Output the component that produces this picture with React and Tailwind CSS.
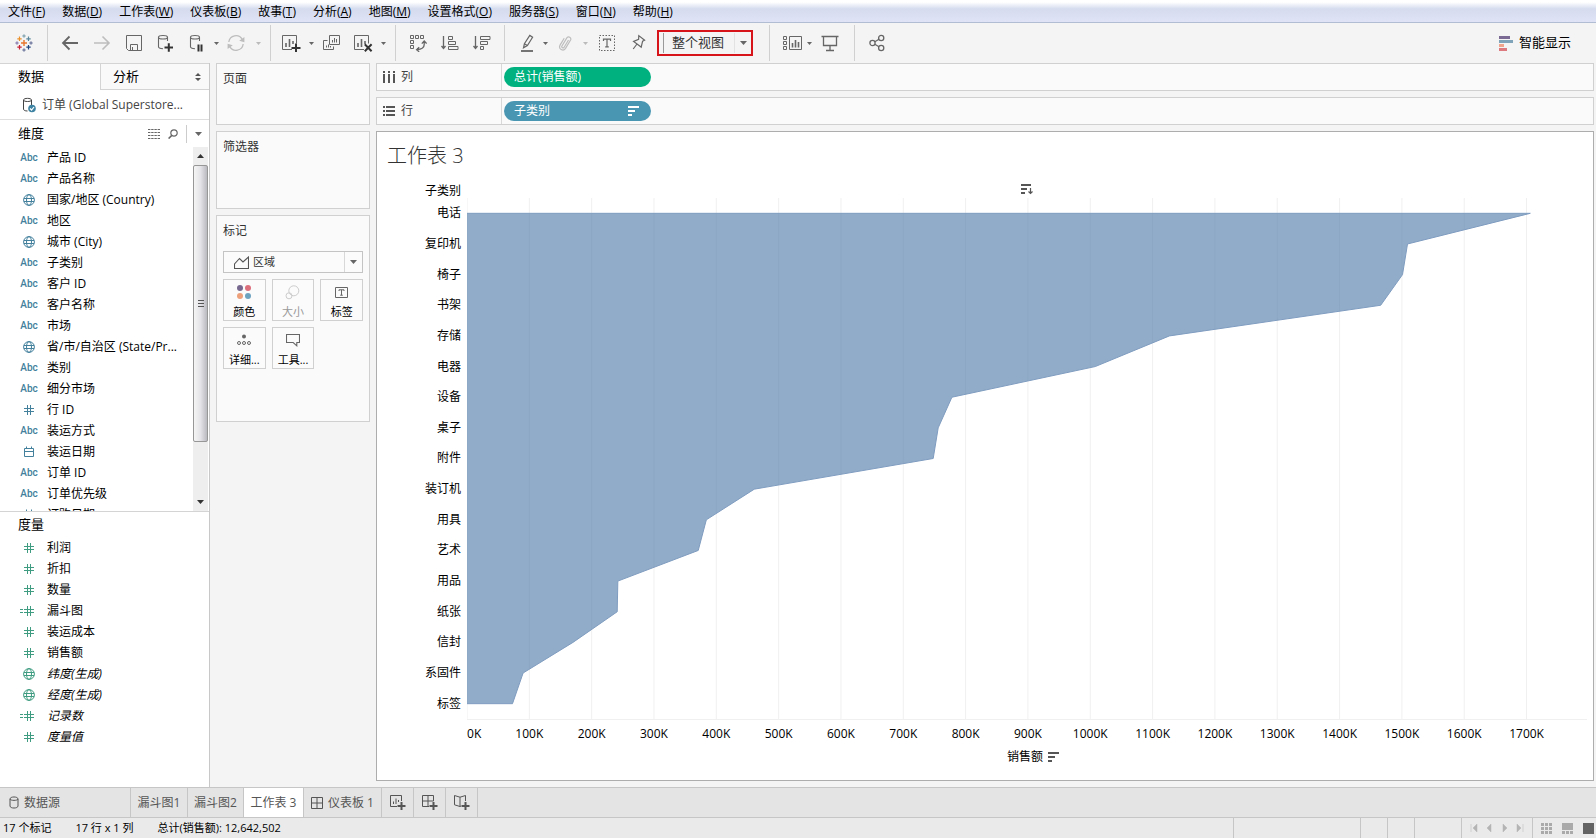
import React from "react";

const MENUS = [
  ["文件", "F"],
  ["数据", "D"],
  ["工作表", "W"],
  ["仪表板", "B"],
  ["故事", "T"],
  ["分析", "A"],
  ["地图", "M"],
  ["设置格式", "O"],
  ["服务器", "S"],
  ["窗口", "N"],
  ["帮助", "H"],
];

const DIMENSIONS = [
  ["abc", "产品 ID"],
  ["abc", "产品名称"],
  ["globe", "国家/地区 (Country)"],
  ["abc", "地区"],
  ["globe", "城市 (City)"],
  ["abc", "子类别"],
  ["abc", "客户 ID"],
  ["abc", "客户名称"],
  ["abc", "市场"],
  ["globe", "省/市/自治区 (State/Pr..."],
  ["abc", "类别"],
  ["abc", "细分市场"],
  ["hash", "行 ID"],
  ["abc", "装运方式"],
  ["date", "装运日期"],
  ["abc", "订单 ID"],
  ["abc", "订单优先级"],
  ["date", "订购日期"],
];

const MEASURES = [
  ["hash", "利润"],
  ["hash", "折扣"],
  ["hash", "数量"],
  ["calc", "漏斗图"],
  ["hash", "装运成本"],
  ["hash", "销售额"],
  ["globe", "纬度(生成)", true],
  ["globe", "经度(生成)", true],
  ["calc", "记录数", true],
  ["hash", "度量值", true],
];

const SALES = [
  ["电话", 1706],
  ["复印机", 1509],
  ["椅子", 1501],
  ["书架", 1466],
  ["存储", 1127],
  ["电器", 1008],
  ["设备", 778],
  ["桌子", 756],
  ["附件", 748],
  ["装订机", 461],
  ["用具", 384],
  ["艺术", 371],
  ["用品", 242],
  ["纸张", 241],
  ["信封", 170],
  ["系固件", 90],
  ["标签", 73],
];

const AXIS_MAX = 1797;
const TICKS = Array.from({ length: 18 }, (_, i) => i * 100);

function Caret({ small, className = "text-[#666]" }) {
  return (
    <svg width={small ? 5 : 7} height={small ? 3 : 4} viewBox="0 0 7 4" className={`shrink-0 ${className}`} aria-hidden="true">
      <path d="M0 0H7L3.5 4Z" fill="currentColor" />
    </svg>
  );
}

function Svg({ w = 18, h = 18, className = "", children }) {
  return (
    <svg
      width={w}
      height={h}
      viewBox={`0 0 ${w} ${h}`}
      fill="none"
      stroke="currentColor"
      strokeWidth="1"
      className={`shrink-0 ${className}`}
      aria-hidden="true"
    >
      {children}
    </svg>
  );
}

function Logo() {
  const plus = (x, y, r, c, w) => (
    <path d={`M${x - r} ${y}H${x + r}M${x} ${y - r}V${y + r}`} stroke={c} strokeWidth={w} />
  );
  return (
    <Svg>
      {plus(9, 9, 3, "#e8762c", 1.4)}
      {plus(4.5, 4.8, 2.2, "#eb912c", 1.2)}
      {plus(13.5, 4.8, 2.2, "#59879b", 1.2)}
      {plus(4.5, 13.2, 2.2, "#c72035", 1.2)}
      {plus(13.5, 13.2, 2.2, "#1f447e", 1.2)}
      {plus(9, 2, 1.7, "#7199a6", 1)}
      {plus(9, 16, 1.7, "#5b6591", 1)}
      {plus(2, 9, 1.7, "#7a6ca5", 1)}
      {plus(16, 9, 1.7, "#5b6591", 1)}
    </Svg>
  );
}

function Tool({ label, width = "w-8", children }) {
  return (
    <button type="button" aria-label={label} className={`flex h-8 shrink-0 items-center justify-center text-[#666] ${width}`}>
      {children}
    </button>
  );
}

function Group({ className = "", children }) {
  return <div className={`flex h-full items-center border-r border-[#d0d0d0] ${className}`}>{children}</div>;
}

const cylinder = (
  <path d="M1.5 3.2C1.5 0.9 10.5 0.9 10.5 3.2V7M1.5 3.2V12.8C1.5 14 3.4 14.7 6 14.7M1.5 3.2C1.5 5.5 10.5 5.5 10.5 3.2" strokeWidth="1.1" />
);

function Toolbar() {
  return (
    <div className="flex h-10 shrink-0 items-center bg-[#f4f4f4] text-[13px]">
      <div className="flex h-9 items-center">
        <Group>
          <Tool label="Tableau" width="w-[47px]"><Logo /></Tool>
        </Group>
        <Group className="pr-1 pl-1.5">
          <Tool label="撤消">
            <Svg><path d="M17 9H2M8.5 2.5L2 9L8.5 15.5" strokeWidth="1.8" /></Svg>
          </Tool>
          <Tool label="重做">
            <Svg className="text-[#bdbdbd]"><path d="M1 9H16M9.5 2.5L16 9L9.5 15.5" strokeWidth="1.6" /></Svg>
          </Tool>
          <Tool label="保存">
            <Svg><path d="M1.5 1.5H16.5V16.5H3.5L1.5 14.5ZM5.5 16V10.5H12.5V16M7.5 16V13" /></Svg>
          </Tool>
          <Tool label="新建数据源">
            <Svg>
              {cylinder}
              <path d="M7.5 13.5H16M11.8 9.2V17.8" stroke="#333" strokeWidth="2" />
            </Svg>
          </Tool>
          <Tool label="暂停自动更新" width="w-7">
            <Svg w={14}>
              {cylinder}
              <path d="M9.5 10.5V17.5M12.5 10.5V17.5" stroke="#333" strokeWidth="2" />
            </Svg>
          </Tool>
          <Tool label="暂停选项" width="w-3"><Caret small /></Tool>
          <Tool label="运行更新" width="w-7">
            <Svg className="text-[#bdbdbd]">
              <path d="M1.8 8A7.2 7.2 0 0 1 15.2 5.4M16.2 10A7.2 7.2 0 0 1 2.8 12.6" strokeWidth="1.3" />
              <path d="M17.4 3V8.2L12.2 6.8ZM0.6 15V9.8L5.8 11.2Z" fill="currentColor" stroke="none" />
            </Svg>
          </Tool>
          <Tool label="更新选项" width="w-4"><Caret small className="text-[#bbb]" /></Tool>
        </Group>
        <Group className="pr-2 pl-1">
          <Tool label="新建工作表">
            <Svg w={20}>
              <path d="M11 15.5H1.5V1.5H15.5V9.5" />
              <path d="M5 13V9M8.5 13V5M12 10V7" strokeWidth="1.6" />
              <path d="M10.5 14H19.5M15 9.5V18" stroke="#333" strokeWidth="2" />
            </Svg>
          </Tool>
          <Tool label="新建选项" width="w-2"><Caret small /></Tool>
          <Tool label="复制工作表">
            <Svg>
              <path d="M7.5 1.5H17.5V10.5H7.5ZM5.5 6.5H1.5V15.5H11.5V12.5" />
              <path d="M10.5 8.5V6M12.5 8.5V4M14.5 8.5V5M4.5 13.5V11.5M6.5 13.5V10.5M8.5 13.5V12" />
            </Svg>
          </Tool>
          <Tool label="清除工作表">
            <Svg w={20}>
              <path d="M11 15.5H1.5V1.5H15.5V9.5" />
              <path d="M5 13V9M8.5 13V5M12 10V7" strokeWidth="1.6" />
              <path d="M11.8 10.3L18.6 17.2M18.6 10.3L11.8 17.2" stroke="#333" strokeWidth="2" />
            </Svg>
          </Tool>
          <Tool label="清除选项" width="w-2"><Caret small /></Tool>
        </Group>
        <Group className="px-1.5">
          <Tool label="交换行和列">
            <Svg>
              <path d="M1.5 1.5H4.5V4.5H1.5ZM6.5 1.5H9.5V4.5H6.5ZM11.5 1.5H14.5V4.5H11.5ZM1.5 6.5H4.5V9.5H1.5ZM1.5 11.5H4.5V14.5H1.5Z" />
              <path d="M15.2 7.5V10.5Q15.2 15.2 8 15.7M12.8 9.6L15.2 7L17.6 9.6M10.2 13.2L7.6 15.7L10.2 17.8" strokeWidth="1.3" />
            </Svg>
          </Tool>
          <Tool label="升序排序">
            <Svg>
              <path d="M2.5 2V14.5M0.5 12L2.5 14.5L4.5 12" strokeWidth="1.3" />
              <path d="M7.5 2.5H11.5V5.5H7.5ZM7.5 7.5H14.5V10.5H7.5ZM7.5 12.5H17V15.5H7.5Z" />
            </Svg>
          </Tool>
          <Tool label="降序排序">
            <Svg>
              <path d="M2.5 2V14.5M0.5 12L2.5 14.5L4.5 12" strokeWidth="1.3" />
              <path d="M7.5 2.5H17V5.5H7.5ZM7.5 7.5H14.5V10.5H7.5ZM7.5 12.5H10.5V15.5H7.5Z" />
            </Svg>
          </Tool>
        </Group>
        <Group className="pr-4 pl-2">
          <Tool label="突出显示" width="w-7">
            <Svg w={13} h={19}>
              <path d="M2.5 13.8L3.4 9.8L8.8 1.4L11.6 3.2L6.4 11.6L2.5 13.8ZM3.4 9.8L6.4 11.6" strokeWidth="1.2" />
              <path d="M0 17H12" strokeWidth="1.8" />
            </Svg>
          </Tool>
          <Tool label="突出显示选项" width="w-2"><Caret small /></Tool>
          <Tool label="组成员">
            <Svg w={14} className="text-[#bdbdbd]">
              <path d="M10.5 6L6 13.5A1.3 1.3 0 0 1 3.8 12.2L9 3.6A2.2 2.2 0 0 1 12.7 5.8L7.4 14.6A3.2 3.2 0 0 1 1.9 11.4L6.2 4.2" strokeWidth="1.2" />
            </Svg>
          </Tool>
          <Tool label="分组选项" width="w-2"><Caret small className="text-[#bbb]" /></Tool>
          <Tool label="显示标记标签" width="w-9">
            <Svg>
              <path d="M1.5 1.5H16.5V16.5H1.5Z" strokeDasharray="1.5 1.5" />
              <path d="M5.5 7V5.2H12.5V7M9 5.2V12.8M7.2 12.8H10.8" strokeWidth="1.2" />
            </Svg>
          </Tool>
          <Tool label="固定轴" width="w-7">
            <Svg w={14} h={18}>
              <path d="M6.8 1.6L12.6 6.2L10.6 7.2L9.2 13.2L7.4 11.8L1.6 7.4L6.6 5.4L6.8 1.6ZM5 10L1.2 15" strokeWidth="1.2" />
            </Svg>
          </Tool>
          <label className="ml-1 flex h-[26px] w-24 items-center border-2 border-[#d8141b] pl-1">
            <span className="sr-only">适合</span>
            <span className="h-5 w-px bg-[#999]" />
            <select className="h-full min-w-0 flex-1 appearance-none bg-transparent pl-2 text-[13px] text-[#333] outline-none">
              <option>整个视图</option>
            </select>
            <span className="flex h-5 w-[17px] items-center justify-center border-l border-[#e2e2e2]"><Caret /></span>
          </label>
        </Group>
        <Group className="pr-1.5 pl-2">
          <Tool label="显示卡" width="w-7">
            <Svg w={20}>
              <path d="M1.5 2.5H4.5V5.5H1.5ZM1.5 7.5H4.5V10.5H1.5ZM1.5 12.5H4.5V15.5H1.5ZM7.5 2.5H19.5V15.5H7.5Z" />
              <path d="M10.5 13.5V9M13.5 13.5V6M16.5 13.5V8" strokeWidth="1.6" />
            </Svg>
          </Tool>
          <Tool label="显示卡选项" width="w-1.5"><Caret small /></Tool>
          <Tool label="演示模式" width="w-9">
            <Svg>
              <path d="M0.5 2.5H17.5M2.5 2.5V11.5H15.5V2.5M9 11.5V16M5 16.5H13" strokeWidth="1.3" />
            </Svg>
          </Tool>
        </Group>
        <div className="pl-1.5">
          <Tool label="共享">
            <Svg w={16} h={18}>
              <circle cx="3.5" cy="9" r="2.6" strokeWidth="1.3" />
              <circle cx="12.2" cy="4" r="2.6" strokeWidth="1.3" />
              <circle cx="12.2" cy="14" r="2.6" strokeWidth="1.3" />
              <path d="M5.8 7.7L10 5.3M5.8 10.3L10 12.7" strokeWidth="1.3" />
            </Svg>
          </Tool>
        </div>
      </div>
      <button type="button" className="mr-[25px] ml-auto flex items-center gap-1.5 text-black">
        <svg width="14" height="15" viewBox="0 0 14 15" aria-hidden="true">
          <path d="M0 0H11V3H0Z" fill="#7b6a94" />
          <path d="M0 4H14V7H0Z" fill="#7fa3b8" />
          <path d="M0 8H5V11H0Z" fill="#f0a48c" />
          <path d="M0 12H8V15H0Z" fill="#dc7a80" />
        </svg>
        智能显示
      </button>
    </div>
  );
}

function FieldIcon({ kind }) {
  if (kind === "abc") return <span className="font-[Roboto,sans-serif] text-[10px] font-medium">Abc</span>;
  if (kind === "globe")
    return (
      <Svg w={18} h={12}>
        <circle cx="9" cy="6" r="5.4" />
        <ellipse cx="9" cy="6" rx="2.5" ry="5.4" />
        <path d="M4 4.5H14M4 7.5H14" />
      </Svg>
    );
  if (kind === "date")
    return (
      <Svg w={18} h={12}>
        <path d="M4.5 2.5H13.5V10.5H4.5ZM4.5 5.5H13.5M6.5 0.5V2.5M11.5 0.5V2.5" />
      </Svg>
    );
  return (
    <Svg w={18} h={12}>
      <path d="M4 4.5H14M4 7.5H14M7.5 1V11M10.5 1V11" />
      {kind === "calc" && <path d="M0 4.5H3M0 7.5H3" />}
    </Svg>
  );
}

function Fields({ items, tone }) {
  return (
    <ul className="min-w-0 flex-1 pl-5">
      {items.map(([kind, name, italic]) => (
        <li key={name} className="flex h-[21px] items-center gap-[9px] leading-[21px] whitespace-nowrap">
          <span className={`flex w-[18px] shrink-0 items-center justify-center ${tone}`}>
            <FieldIcon kind={kind} />
          </span>
          <span className={italic ? "italic" : ""}>{name}</span>
        </li>
      ))}
    </ul>
  );
}

function Sidebar() {
  return (
    <aside className="flex w-[210px] shrink-0 flex-col border-r border-[#c8c8c8] bg-white">
      <div className="flex h-[27px] shrink-0 border-t border-[#d4d4d4] text-[13px]">
        <button type="button" className="w-[100px] pl-[18px] text-left">数据</button>
        <button type="button" className="flex flex-1 items-center justify-between border-b border-l border-[#d4d4d4] bg-[#f9f9f9] pr-2 pl-3">
          分析
          <svg width="6" height="8" viewBox="0 0 6 8" fill="#555" aria-hidden="true">
            <path d="M0 3H6L3 0ZM0 5H6L3 8Z" />
          </svg>
        </button>
      </div>
      <button type="button" className="flex h-[30px] shrink-0 items-center gap-[5px] border-b border-[#dedede] pl-[22px] text-left whitespace-nowrap text-[#444]">
        <Svg w={15} h={16}>
          <path d="M1.5 3C1.5 0.8 9.5 0.8 9.5 3V8M1.5 3V12C1.5 13.3 3 14 5.5 14M1.5 3C1.5 5 9.5 5 9.5 3" />
          <circle cx="10" cy="11.5" r="3.8" fill="#3f83a3" stroke="none" />
          <path d="M8 11.5L9.6 13L12 10" stroke="#fff" strokeWidth="1.2" />
        </Svg>
        订单 (Global Superstore...
      </button>
      <div className="flex h-[27px] shrink-0 items-center pr-[7px] pl-[18px] text-[#666]">
        <h2 className="flex-1 text-[13px] text-black">维度</h2>
        <button type="button" aria-label="查看数据">
          <Svg w={12} h={10}>
            <path d="M0 0.5H12M0 3.5H12M0 6.5H12M0 9.5H12" strokeDasharray="2.4 0.8" />
          </Svg>
        </button>
        <button type="button" aria-label="查找字段" className="mr-2 ml-2">
          <Svg w={10} h={10}>
            <circle cx="6" cy="4" r="3.2" strokeWidth="1.2" />
            <path d="M3.8 6.4L0.6 9.6" strokeWidth="1.5" />
          </Svg>
        </button>
        <button type="button" aria-label="维度菜单" className="flex h-[18px] items-center border-l border-[#ccc] pl-2"><Caret /></button>
      </div>
      <section className="flex min-h-0 flex-1 overflow-hidden border-b border-[#d4d4d4] pr-px">
        <Fields items={DIMENSIONS} tone="text-[#43809c]" />
        <div className="flex w-[15px] shrink-0 flex-col items-center bg-[#eeeeee]">
          <span className="flex h-[18px] shrink-0 items-center">
            <svg width="7" height="4" viewBox="0 0 7 4" aria-hidden="true"><path d="M0 4H7L3.5 0Z" fill="#333" /></svg>
          </span>
          <span className="flex w-full flex-[277] items-center justify-center rounded-[2px] border border-[#979797] bg-linear-to-r from-[#f5f5f5] via-[#e4e4e8] to-[#b9b9c0]">
            <svg width="6" height="8" viewBox="0 0 6 8" stroke="#555" aria-hidden="true">
              <path d="M0 0.5H6M0 3.5H6M0 6.5H6" />
            </svg>
          </span>
          <span className="flex-[51]" />
          <span className="flex h-[18px] shrink-0 items-center"><Caret className="text-[#333]" /></span>
        </div>
      </section>
      <section className="h-[275px] shrink-0">
        <h2 className="h-[25px] pl-[18px] text-[13px] leading-[25px]">度量</h2>
        <Fields items={MEASURES} tone="text-[#3f9c80]" />
      </section>
    </aside>
  );
}

function MarkButton({ label, disabled, children }) {
  return (
    <button
      type="button"
      disabled={disabled}
      className={`flex h-[42px] flex-col items-center justify-between border border-[#d0d0d0] bg-[#fbfbfb] pt-1 leading-4 ${disabled ? "text-[#999]" : "text-black"}`}
    >
      <span className={`flex h-4 items-center ${disabled ? "text-[#ccc]" : "text-[#666]"}`}>{children}</span>
      <span>{label}</span>
    </button>
  );
}

function Cards() {
  const card = "border border-[#d0d0d0] bg-[#fafafa] px-1.5 text-[#333]";
  return (
    <div className="flex w-[154px] shrink-0 flex-col gap-1.5">
      <section className={`h-[62px] pt-1 ${card}`}>
        <h2 className="leading-[22px]">页面</h2>
      </section>
      <section className={`h-[78px] pt-1 ${card}`}>
        <h2 className="leading-[22px]">筛选器</h2>
      </section>
      <section className={`h-[207px] pt-1 ${card}`}>
        <h2 className="leading-[22px]">标记</h2>
        <label className="mt-[9px] flex h-[22px] items-center border border-[#c4c4c4] bg-[#fbfbfb] pl-2.5">
          <span className="sr-only">标记类型</span>
          <Svg w={15} h={13} className="text-[#555]">
            <path d="M0.5 12.5V8L5.5 2.5L9 6L14.5 1V12.5Z" strokeWidth="1.1" />
          </Svg>
          <select className="h-full min-w-0 flex-1 appearance-none bg-transparent pl-1 text-[11px] text-[#333] outline-none">
            <option>区域</option>
          </select>
          <span className="flex h-full w-[18px] items-center justify-center border-l border-[#d8d8d8]"><Caret /></span>
        </label>
        <div className="mt-1.5 grid grid-cols-3 gap-1.5 text-[11px]">
          <MarkButton label="颜色">
            <svg width="14" height="14" viewBox="0 0 14 14" aria-hidden="true">
              <circle cx="3" cy="3" r="3" fill="#77688f" />
              <circle cx="11" cy="3" r="3" fill="#dc6f7c" />
              <circle cx="3" cy="11" r="3" fill="#eda07a" />
              <circle cx="11" cy="11" r="3" fill="#6ea3c0" />
            </svg>
          </MarkButton>
          <MarkButton label="大小" disabled>
            <Svg w={15} h={15}>
              <circle cx="8.8" cy="5.8" r="5" />
              <circle cx="4" cy="10.8" r="3" />
            </Svg>
          </MarkButton>
          <MarkButton label="标签">
            <Svg w={13} h={13}>
              <path d="M0.5 1.5H12.5V11.5H0.5Z" />
              <path d="M4 5V3.8H9V5M6.5 3.8V9.2M5.2 9.2H7.8" />
            </Svg>
          </MarkButton>
          <MarkButton label="详细...">
            <Svg w={14} h={12}>
              <circle cx="7" cy="2.5" r="2" fill="currentColor" stroke="none" />
              <circle cx="2" cy="9" r="1.5" />
              <circle cx="7" cy="9" r="1.5" />
              <circle cx="12" cy="9" r="1.5" />
            </Svg>
          </MarkButton>
          <MarkButton label="工具...">
            <Svg w={14} h={14}>
              <path d="M0.5 1.5H13.5V9.5H10.8V12.8L7.2 9.5H0.5Z" strokeWidth="1.1" />
            </Svg>
          </MarkButton>
        </div>
      </section>
    </div>
  );
}

function Shelf({ icon, name, children }) {
  return (
    <div className="flex h-7 shrink-0 border border-[#d0d0d0] bg-[#fafafa]">
      <div className="flex w-[125px] items-center gap-1.5 border-r border-[#d8d8d8] pl-1.5 text-[#444]">
        {icon}
        {name}
      </div>
      <div className="flex items-center pl-0.5">{children}</div>
    </div>
  );
}

function SortBars({ className = "" }) {
  return (
    <svg width="11" height="10" viewBox="0 0 11 10" fill="currentColor" className={className} aria-hidden="true">
      <path d="M0 0H11V2H0ZM0 4H7V6H0ZM0 8H4V10H0Z" />
    </svg>
  );
}

function Chart() {
  const edge = SALES.map(([, v], i) => `${v},${i + 0.5}`).join(" ");
  const last = SALES.length - 0.5;
  return (
    <figure className="mr-1.5 flex min-h-0 flex-1">
      <div className="flex w-[90px] shrink-0 flex-col pr-1.5 pb-[61px] text-right">
        <div className="h-3.5 leading-[14px]">子类别</div>
        <div className="flex flex-1 flex-col">
          {SALES.map(([name]) => (
            <div key={name} className="flex flex-1 items-center justify-end leading-4">{name}</div>
          ))}
        </div>
      </div>
      <div className="flex min-w-0 flex-1 flex-col">
        <div className="flex h-3.5 shrink-0 items-start justify-center text-[#555]">
          <Svg w={13} h={11}>
            <path d="M0 1H10M0 5H6M0 9H4" strokeWidth="2" />
            <path d="M9.5 4V9M7.5 7.5L9.5 9.5L11.5 7.5" strokeWidth="1.2" />
          </Svg>
        </div>
        <div className="min-h-0 flex-1">
          <svg className="block h-full w-full" viewBox={`0 0 ${AXIS_MAX} 17`} preserveAspectRatio="none" role="img" aria-label="各子类别的销售额">
            {TICKS.map((t) => (
              <path key={t} d={`M${t} 0V17`} stroke="#f0f0f0" vectorEffect="non-scaling-stroke" />
            ))}
            <polygon points={`0,0.5 ${edge} 0,${last}`} fill="#4e79a7" fillOpacity="0.62" />
            <polyline points={`0,0.5 ${edge} 0,${last}`} fill="none" stroke="#7f9cc0" vectorEffect="non-scaling-stroke" />
          </svg>
        </div>
        <div className="flex h-[27px] shrink-0 items-end border-t border-[#f0f0f0] leading-6">
          {TICKS.map((t) => (
            <span key={t} className={t === 0 ? "min-w-0 flex-[50]" : "flex min-w-0 flex-[100] justify-center"}>{t}K</span>
          ))}
          <span className="flex-[47]" />
        </div>
        <figcaption className="flex h-[34px] shrink-0 items-start justify-center gap-[5px] pl-3 leading-[22px]">
          销售额
          <SortBars className="mt-1.5 text-[#555]" />
        </figcaption>
      </div>
    </figure>
  );
}

function SheetTab({ width, active, label, children }) {
  return (
    <button
      type="button"
      aria-label={label}
      className={`flex items-center justify-center gap-[5px] border-r border-[#c6c6c6] whitespace-nowrap ${width} ${active ? "bg-white" : ""}`}
    >
      {children}
    </button>
  );
}

function SheetTabs() {
  const plus = <path d="M8.5 12H16.5M12.5 8V16" strokeWidth="2" />;
  return (
    <nav className="flex h-[30px] shrink-0 border-t border-[#c6c6c6] bg-[#e4e4e4] text-[#555]">
      <button type="button" className="flex w-[131px] items-center gap-[5px] border-r border-[#c6c6c6] pl-[9px]">
        <Svg w={10} h={13}>
          <path d="M1 3C1 0.3 9 0.3 9 3V10C9 12.7 1 12.7 1 10ZM1 3C1 4.8 9 4.8 9 3" />
        </Svg>
        数据源
      </button>
      <SheetTab width="w-[57px]">漏斗图1</SheetTab>
      <SheetTab width="w-14">漏斗图2</SheetTab>
      <SheetTab width="w-[60px]" active>工作表 3</SheetTab>
      <SheetTab width="w-[78px]">
        <Svg w={12} h={12}><path d="M0.5 0.5H11.5V11.5H0.5ZM6 0.5V11.5M0.5 6H11.5" /></Svg>
        仪表板 1
      </SheetTab>
      <SheetTab width="w-8" label="新建工作表">
        <Svg w={17} h={17}>
          <path d="M8 12.5H1.5V1.5H12.5V7M4.5 10V7.5M7 10V4.5M9.5 8V6" />
          {plus}
        </Svg>
      </SheetTab>
      <SheetTab width="w-8" label="新建仪表板">
        <Svg w={17} h={17}>
          <path d="M8 12.5H1.5V1.5H12.5V7M7 1.5V12.5M1.5 7H12.5" />
          {plus}
        </Svg>
      </SheetTab>
      <SheetTab width="w-8" label="新建故事">
        <Svg w={17} h={17}>
          <path d="M8 12L7 12.5L1.5 10.8V1.5L7 3.2L12.5 1.5V7M7 3.2V12.5" />
          {plus}
        </Svg>
      </SheetTab>
    </nav>
  );
}

function StatusBar() {
  const nav = [
    ["第一个", "M1 0V8M7 0V8L3 4Z"],
    ["上一个", "M6 0V8L2 4Z"],
    ["下一个", "M2 0V8L6 4Z"],
    ["最后一个", "M1 0V8L5 4ZM7 0V8"],
  ];
  return (
    <footer className="flex h-[21px] shrink-0 items-center border-t border-[#c6c6c6] bg-[#eaeaea] pl-[3px] text-[11px]">
      <div className="flex flex-1 gap-6">
        <span>17 个标记</span>
        <span>17 行 x 1 列</span>
        <span>总计(销售额): 12,642,502</span>
      </div>
      <div className="flex h-full">
        <span className="w-[127px] border-l border-[#c6c6c6]" />
        <span className="w-[27px] border-l border-[#c6c6c6]" />
        <span className="w-[27px] border-l border-[#c6c6c6]" />
        <span className="w-[47px] border-l border-[#c6c6c6]" />
        <div className="flex w-[71px] items-center justify-around border-l border-[#c6c6c6] px-1">
          {nav.map(([label, d]) => (
            <button key={label} type="button" aria-label={label}>
              <svg width="8" height="8" viewBox="0 0 8 8" fill="#b4b4b4" stroke="#b4b4b4" strokeWidth="0.5" aria-hidden="true"><path d={d} /></svg>
            </button>
          ))}
        </div>
        <div className="flex items-center gap-2.5 border-l border-[#c6c6c6] pr-0.5 pl-2 text-[#aaa]">
          <button type="button" aria-label="显示工作表排序程序">
            <svg width="11" height="11" viewBox="0 0 11 11" fill="currentColor" aria-hidden="true">
              <path d="M0 0H3V3H0ZM4 0H7V3H4ZM8 0H11V3H8ZM0 4H3V7H0ZM4 4H7V7H4ZM8 4H11V7H8ZM0 8H3V11H0ZM4 8H7V11H4ZM8 8H11V11H8Z" />
            </svg>
          </button>
          <button type="button" aria-label="显示连环缩略图">
            <svg width="11" height="11" viewBox="0 0 11 11" fill="currentColor" aria-hidden="true">
              <path d="M0 0H11V7H0ZM0 8H3V11H0ZM4 8H7V11H4ZM8 8H11V11H8Z" />
            </svg>
          </button>
          <button type="button" aria-label="显示标签" className="h-[11px] w-[11px] bg-[#636363]" />
        </div>
      </div>
    </footer>
  );
}

export default function App() {
  return (
    <div className="flex h-screen min-h-[640px] flex-col overflow-hidden bg-[#f4f4f4] font-['Open_Sans','Noto_Sans_CJK_SC',sans-serif] text-[12px] text-black">
      <nav className="flex h-[23px] shrink-0 items-center gap-[17px] border-b border-[#b0bdd3] bg-linear-to-b from-white from-10% via-[#d5dcee] via-40% to-[#dfe3f5] pt-0.5 pl-2">
        {MENUS.map(([name, key]) => (
          <button key={name} type="button" className="whitespace-nowrap">
            {name}(<u>{key}</u>)
          </button>
        ))}
      </nav>
      <Toolbar />
      <div className="flex min-h-0 flex-1 gap-1.5">
        <Sidebar />
        <Cards />
        <main className="flex min-w-0 flex-1 flex-col gap-1.5 pr-0.5 pb-1.5">
          <Shelf
            name="列"
            icon={
              <svg width="12" height="12" viewBox="0 0 12 12" fill="#555" aria-hidden="true">
                <path d="M0 0H2V2H0ZM5 0H7V2H5ZM10 0H12V2H10ZM0 3H2V12H0ZM5 3H7V12H5ZM10 3H12V12H10Z" />
              </svg>
            }
          >
            <button type="button" className="h-5 w-[147px] rounded-full bg-[#00b180] pl-2.5 text-left leading-5 text-white">总计(销售额)</button>
          </Shelf>
          <Shelf
            name="行"
            icon={
              <svg width="12" height="12" viewBox="0 0 12 12" fill="#555" aria-hidden="true">
                <path d="M0 1H2V3H0ZM0 5H2V7H0ZM0 9H2V11H0ZM3 1H12V3H3ZM3 5H12V7H3ZM3 9H12V11H3Z" />
              </svg>
            }
          >
            <button type="button" className="flex h-5 w-[147px] items-center justify-between rounded-full bg-[#4996b2] pr-3 pl-2.5 leading-5 text-white">
              子类别
              <SortBars />
            </button>
          </Shelf>
          <section className="flex min-h-0 flex-1 flex-col border border-[#adadad] bg-white">
            <h1 className="h-[52px] shrink-0 pt-2 pl-2.5 text-[20px] leading-8 font-light text-[#333]">工作表 3</h1>
            <Chart />
          </section>
        </main>
      </div>
      <SheetTabs />
      <StatusBar />
    </div>
  );
}
